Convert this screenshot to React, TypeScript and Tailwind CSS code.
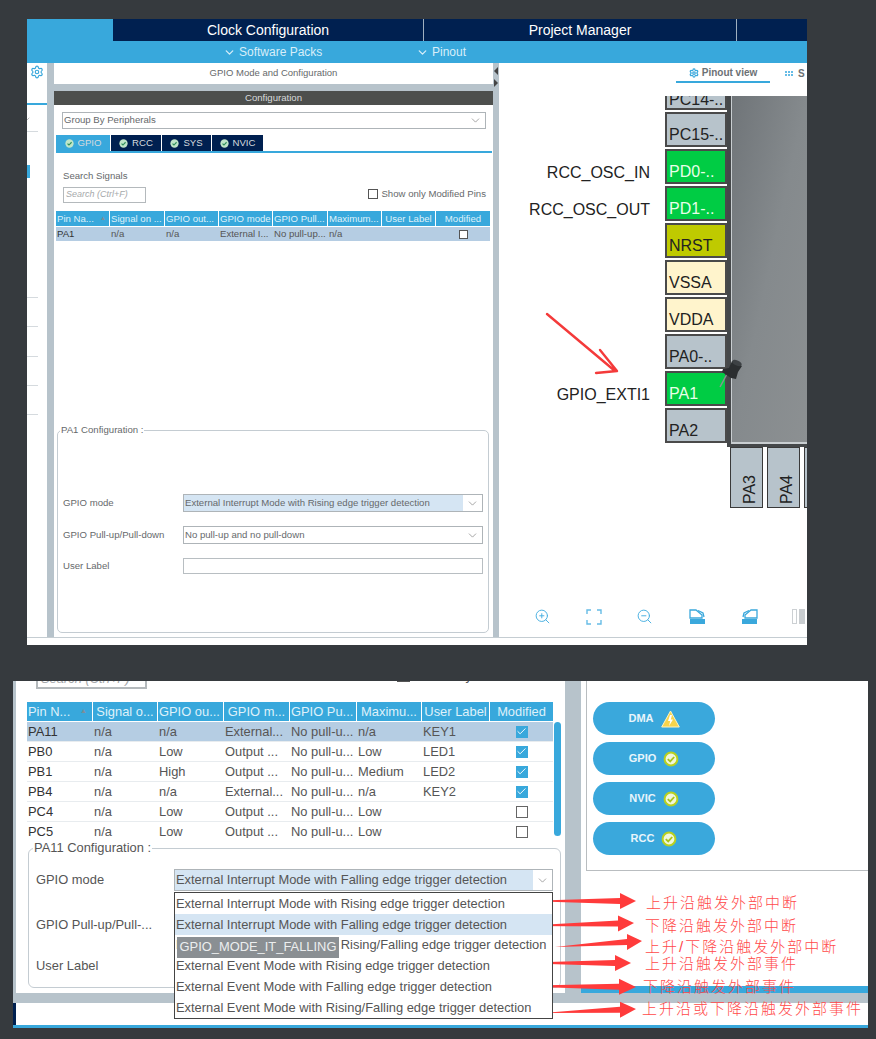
import React from "react";
import { ZoomIn, ZoomOut, ChevronDown, Check, Settings } from "lucide-react";

const topHead = ["Pin Na...", "Signal on ...", "GPIO out...", "GPIO mode", "GPIO Pull...", "Maximum...", "User Label", "Modified"];
const topRow = ["PA1", "n/a", "n/a", "External I...", "No pull-up...", "n/a", ""];
const botHead = ["Pin N...", "Signal o...", "GPIO ou...", "GPIO m...", "GPIO Pu...", "Maximu...", "User Label", "Modified"];
const botRows = [
  ["PA11", "n/a", "n/a", "External...", "No pull-u...", "n/a", "KEY1", true],
  ["PB0", "n/a", "Low", "Output ...", "No pull-u...", "Low", "LED1", true],
  ["PB1", "n/a", "High", "Output ...", "No pull-u...", "Medium", "LED2", true],
  ["PB4", "n/a", "n/a", "External...", "No pull-u...", "n/a", "KEY2", true],
  ["PC4", "n/a", "Low", "Output ...", "No pull-u...", "Low", "", false],
  ["PC5", "n/a", "Low", "Output ...", "No pull-u...", "Low", "", false],
] as const;

const pins = [
  { n: "PC15-..", c: "bg-[#b7c3cb] text-[#222]", l: "" },
  { n: "PD0-..", c: "bg-[#00cc44] text-[#e8ffe8]", l: "RCC_OSC_IN" },
  { n: "PD1-..", c: "bg-[#00cc44] text-[#e8ffe8]", l: "RCC_OSC_OUT" },
  { n: "NRST", c: "bg-[#bfca00] text-[#222]", l: "" },
  { n: "VSSA", c: "bg-[#fff4cc] text-[#222]", l: "" },
  { n: "VDDA", c: "bg-[#fff4cc] text-[#222]", l: "" },
  { n: "PA0-..", c: "bg-[#b7c3cb] text-[#222]", l: "" },
  { n: "PA1", c: "bg-[#00cc44] text-[#e8ffe8]", l: "GPIO_EXTI1" },
  { n: "PA2", c: "bg-[#b7c3cb] text-[#222]", l: "" },
];

const menu = [
  "External Interrupt Mode with Rising edge trigger detection",
  "External Interrupt Mode with Falling edge trigger detection",
  "External Interrupt Mode with Rising/Falling edge trigger detection",
  "External Event Mode with Rising edge trigger detection",
  "External Event Mode with Falling edge trigger detection",
  "External Event Mode with Rising/Falling edge trigger detection",
];

const notes = [
  { t: "上升沿触发外部中断", c: "left-[646px] top-[892px]" },
  { t: "下降沿触发外部中断", c: "left-[645px] top-[915px]" },
  { t: "上升/下降沿触发外部中断", c: "left-[645px] top-[936px]" },
  { t: "上升沿触发外部事件", c: "left-[645px] top-[953px]" },
  { t: "下降沿触发外部事件", c: "left-[643px] top-[976px]" },
  { t: "上升沿或下降沿触发外部事件", c: "left-[642px] top-[998px]" },
];

const arrows = [
  [526, 901, 620, 636, 901],
  [521, 926, 618, 634, 923],
  [555, 947, 627, 642, 941],
  [515, 963, 615, 631, 963],
  [510, 986, 619, 636, 987],
  [543, 1013, 620, 636, 1009],
];

function TabCheck() {
  return (
    <svg width="9" height="9" viewBox="0 0 10 10" className="shrink-0">
      <circle cx="5" cy="5" r="4.6" fill="#bfe6c8" />
      <path d="M2.8 5.1 4.4 6.7 7.3 3.6" fill="none" stroke="#2f8f5a" strokeWidth="1.3" />
    </svg>
  );
}

function PillCheck() {
  return (
    <svg width="16" height="16" viewBox="0 0 16 16" className="shrink-0">
      <circle cx="8" cy="8" r="6.4" fill="#f1f7dc" stroke="#b9d020" strokeWidth="2" />
      <path d="M4.8 8.1 7.2 10.4 11.2 6" fill="none" stroke="#a9c31a" strokeWidth="1.8" />
    </svg>
  );
}

function Warn() {
  return (
    <svg width="19" height="18" viewBox="0 0 19 18" className="shrink-0">
      <path d="M9.5 1 18.3 17H.7Z" fill="#f7d44c" stroke="#fff3c0" strokeWidth="1" />
      <path d="M9 5 7 11h2.2L8 16l4-6.4H9.8L11 5Z" fill="#fff" />
    </svg>
  );
}

function Fit() {
  return (
    <svg width="16" height="16" viewBox="0 0 16 16" fill="none" stroke="#66bce6" strokeWidth="1.4">
      <path d="M1 5V1h4M11 1h4v4M15 11v4h-4M5 15H1v-4" />
    </svg>
  );
}

function Rot({ flip }: { flip?: boolean }) {
  return (
    <svg width="17" height="16" viewBox="0 0 17 16" className={flip ? "-scale-x-100" : ""}>
      <path d="M1 1h6l6 5v3H5L1 9Z" fill="#fff" stroke="#3aa8dc" strokeWidth="1.3" />
      <path d="M1 10h15v5H1Z" fill="#3aa8dc" />
      <path d="M9 1.5 14 4l1 4" fill="none" stroke="#3aa8dc" strokeWidth="1.3" />
    </svg>
  );
}

function Select({ label, light, h }: { label: string; light?: boolean; h: string }) {
  return (
    <div className={`flex items-center border border-[#aeb4b8] ${h} ${light ? "" : "bg-white"}`}>
      <span className={`flex h-full flex-1 items-center whitespace-nowrap pl-[1px] ${light ? "bg-[#d5e5f3]" : ""}`}>{label}</span>
      <ChevronDown className="mr-[3px] ml-[3px] text-[#777]" size={13} strokeWidth={1.2} />
    </div>
  );
}

function Pill({ label, warn }: { label: string; warn?: boolean }) {
  return (
    <div className="flex h-[33px] w-[122px] items-center justify-center gap-[7px] rounded-full bg-[#3aa8dc] text-[11px] font-bold text-[#e8f5fb]">
      <span>{label}</span>
      {warn ? <Warn /> : <PillCheck />}
    </div>
  );
}

function TopWindow() {
  return (
    <div className="ml-[27px] flex h-[626px] w-[780px] flex-col overflow-hidden bg-white">
      <div className="flex h-[22px] bg-[#002050] text-[14px] text-white">
        <div className="w-[86px] bg-[#38a8dc]" />
        <div className="flex w-[311px] items-center justify-center border-r border-[#9fb0c0]">Clock Configuration</div>
        <div className="flex w-[313px] items-center justify-center border-r border-[#9fb0c0]">Project Manager</div>
      </div>
      <div className="relative flex h-[22px] items-center bg-[#38a8dc] text-[12px] text-[#d8eef9]">
        <div className="ml-[196px] flex w-[193px] items-center gap-[3px]">
          <ChevronDown size={13} strokeWidth={2.4} />
          <span>Software Packs</span>
        </div>
        <div className="flex items-center gap-[3px]">
          <ChevronDown size={13} strokeWidth={2.4} />
          <span>Pinout</span>
        </div>
      </div>
      <div className="flex h-[574px]">
        <div className="flex w-[20px] flex-col">
          <div className="flex h-[20px] items-start justify-end pt-[2px] pr-[3px]">
            <Settings size={14} className="text-[#3aa8dc]" strokeWidth={2} />
          </div>
          <div className="mt-[20px] h-[2px] bg-[#38a8dc]" />
          <ChevronDown size={8} strokeWidth={1.5} className="mt-[10px] -ml-[4px] text-[#777]" />
          <div className="mt-[8px] h-px w-[11px] bg-[#d5dade]" />
          <div className="mt-[33px] h-[13px] w-[3px] bg-[#38a8dc]" />
          <div className="mt-[119px] h-px w-[11px] bg-[#d5dade]" />
          <div className="mt-[28px] h-px w-[11px] bg-[#d5dade]" />
          <div className="mt-[29px] h-px w-[11px] bg-[#d5dade]" />
          <div className="mt-[28px] h-px w-[11px] bg-[#d5dade]" />
          <div className="mt-[28px] h-px w-[11px] bg-[#d5dade]" />
        </div>
        <div className="w-[7px] bg-[#b7c3cb]" />
        <div className="flex w-[439px] flex-col bg-[#b7c3cb] text-[#66696b]">
          <div className="flex h-[21px] items-center justify-center bg-white text-[9.5px]">GPIO Mode and Configuration</div>
          <div className="mt-[7px] flex h-[14px] items-center justify-center bg-[#4d4f4d] text-[9.6px] text-[#d8dadb]">Configuration</div>
          <div className="flex flex-1 flex-col bg-white pl-[2px] text-[9.6px]">
            <div className="mt-[7px] ml-[6px] w-[424px]">
              <Select label="Group By Peripherals" h="h-[17px]" />
            </div>
            <div className="mt-[6px] flex h-[16px] gap-px text-[9.6px] text-[#d5dade]">
              <div className="flex w-[54px] items-center justify-center gap-[4px] bg-[#38a8dc]"><TabCheck />GPIO</div>
              <div className="flex w-[50px] items-center justify-center gap-[4px] bg-[#002050]"><TabCheck />RCC</div>
              <div className="flex w-[49px] items-center justify-center gap-[4px] bg-[#002050]"><TabCheck />SYS</div>
              <div className="flex w-[51px] items-center justify-center gap-[4px] bg-[#002050]"><TabCheck />NVIC</div>
            </div>
            <div className="h-[2px] w-[436px] bg-[#38a8dc]" />
            <div className="mt-[17px] ml-[7px] h-[12px] leading-[12px]">Search Signals</div>
            <div className="mt-[5px] ml-[7px] flex items-center justify-between pr-[7px]">
              <div className="flex h-[16px] w-[83px] items-center border border-[#b4b9bc] pl-[2px] text-[9px] italic text-[#a6a9ab]">Search (Ctrl+F)</div>
              <div className="flex items-center gap-[3px] pb-[2px]">
                <div className="size-[10px] border border-[#555] bg-white" />
                <span className="whitespace-nowrap">Show only Modified Pins</span>
              </div>
            </div>
            <div className="mt-[8px] grid w-[434px] grid-cols-[53px_54px_53px_53px_54px_53px_53px_54px] gap-x-px">
              {topHead.map((t, i) => (
                <div key={t} className={`relative flex h-[15px] items-center overflow-hidden whitespace-nowrap bg-[#38a8dc] text-[#dff1fa] ${i > 5 ? "justify-center" : "pl-[1px]"}`}>
                  {t}
                  {i === 0 && <span className="absolute right-[3px] text-[6px] text-[#7d8e98]">▲</span>}
                </div>
              ))}
            </div>
            <div className="mt-px grid w-[434px] grid-cols-[53px_54px_53px_53px_54px_53px_53px_54px] gap-x-px bg-[#b5cde3] text-[#555]">
              {topRow.map((t, i) => (
                <div key={i} className={`flex h-[14px] items-center whitespace-nowrap pl-[1px] pb-px ${i === 0 ? "text-[#333]" : ""}`}>{t}</div>
              ))}
              <div className="flex items-center justify-center"><div className="size-[9px] border border-[#555] bg-white" /></div>
            </div>
            <fieldset className="mt-auto mb-[4px] ml-px flex h-[209px] w-[432px] flex-col rounded-[5px] border border-[#c4ccd2] pl-[5px] pr-[5px]">
              <legend className="-ml-[3px] px-[1px] leading-[12px]">PA1 Configuration :</legend>
              <div className="mt-[58px] flex items-center">
                <span className="w-[120px]">GPIO mode</span>
                <div className="w-[300px]"><Select light label="External Interrupt Mode with Rising edge trigger detection" h="h-[18px]" /></div>
              </div>
              <div className="mt-[14px] flex items-center">
                <span className="w-[120px] whitespace-nowrap">GPIO Pull-up/Pull-down</span>
                <div className="w-[300px]"><Select label="No pull-up and no pull-down" h="h-[18px]" /></div>
              </div>
              <div className="mt-[14px] flex items-center">
                <span className="w-[120px]">User Label</span>
                <div className="h-[16px] w-[300px] border border-[#b8bec2]" />
              </div>
            </fieldset>
          </div>
        </div>
        <div className="flex w-[6px] flex-col items-center gap-[4px] bg-[#b7c3cb] pt-[4px]">
          <div className="h-0 w-0 border-y-[4px] border-r-[4px] border-y-transparent border-r-[#444]" />
          <div className="h-0 w-0 border-y-[4px] border-l-[4px] border-y-transparent border-l-[#444]" />
        </div>
        <div className="flex min-w-0 flex-1 flex-col">
          <div className="flex h-[33px] items-start">
            <div className="mt-[1px] ml-[177px] flex h-[19px] w-[94px] items-center justify-center gap-[3px] border-b-2 border-[#38a8dc] text-[10px] font-bold text-[#6c7175]">
              <Settings size={10} className="text-[#3aa8dc]" strokeWidth={3} />
              <span>Pinout view</span>
            </div>
            <div className="mt-[3px] ml-[15px] flex items-center gap-[5px] text-[10px] font-bold text-[#6c7175]">
              <span className="grid grid-cols-3 gap-px">
                {[0, 1, 2, 3, 4, 5].map((k) => <span key={k} className="size-[2px] bg-[#66bce6]" />)}
              </span>
              <span>S</span>
            </div>
          </div>
          <div className="flex h-[351px]">
            <div className="flex h-[348px] w-[228px] flex-col gap-[2px]">
              <div className="ml-[166px] flex h-[14px] w-[62px] items-end overflow-hidden border-x-2 border-b-2 border-[#4a4a4a] bg-[#b7c3cb] pl-[2px] text-[16px] leading-[18px] text-[#222]">
                <span className="mb-[-1px]">PC14-..</span>
              </div>
              {pins.map((p) => (
                <div key={p.n} className="flex h-[35px] items-center">
                  <div className="w-[151px] whitespace-nowrap pt-[12px] text-right text-[16px] text-[#222]">{p.l}</div>
                  <div className={`ml-[15px] flex h-full w-[62px] items-end whitespace-nowrap border-2 border-[#4a4a4a] pl-[2px] text-[16px] leading-[20px] ${p.c}`}>{p.n}</div>
                </div>
              ))}
            </div>
            <div className="flex-1 border-b-[3px] border-l-[4px] border-[#45484a] bg-gradient-to-br from-[#6f7478] via-[#858a8d] to-[#8c9092] shadow-[inset_1px_-2px_0_#c9ced1]" />
          </div>
          <div className="ml-[231px] flex h-[61px] gap-[4px] overflow-hidden">
            {["PA3", "PA4", ""].map((t, i) => (
              <div key={i} className="flex w-[33px] shrink-0 items-end justify-center border border-[#3a3a3a] bg-[#b7c3cb] pb-[3px] pl-[7px] text-[16px] leading-[18px] text-[#222]">
                <span className="rotate-180 [writing-mode:vertical-rl]">{t}</span>
              </div>
            ))}
          </div>
          <div className="mt-[100px] flex items-center pl-[35px] text-[#4cb1e2]">
            <ZoomIn size={17} strokeWidth={1.4} />
            <div className="ml-[35px]"><Fit /></div>
            <div className="ml-[34px]"><ZoomOut size={17} strokeWidth={1.4} /></div>
            <div className="ml-[36px]"><Rot /></div>
            <div className="ml-[35px]"><Rot flip /></div>
            <div className="ml-[34px] flex gap-[2px]">
              <span className="h-[15px] w-[5px] border border-[#ccd0d3]" />
              <span className="h-[15px] w-[6px] bg-[#c9cdd0]" />
            </div>
          </div>
        </div>
      </div>
      <div className="h-[8px] border-t border-[#c5cdd2] bg-white" />
    </div>
  );
}

function BottomWindow() {
  return (
    <div className="mt-[36px] ml-[13px] flex h-[347px] w-[855px] flex-col overflow-hidden bg-white">
      <div className="flex h-[312px]">
        <div className="w-[3px] bg-[#b7c3cb]" />
        <div className="flex w-[549px] flex-col text-[12.9px] text-[#555]">
          <div className="flex h-[7px] items-end justify-between pl-[20px] pr-[12px]">
            <div className="mb-[-1px] flex h-[20px] w-[111px] shrink-0 items-center border-2 border-[#b4b9bc] pl-[3px] italic text-[#a6a9ab]">Search (Ctrl+F)</div>
            <div className="mb-[3px] flex items-center gap-[3px] text-[#555]">
              <div className="size-[13px] border border-[#555]" />
              <span className="whitespace-nowrap">Show only Modified Pins</span>
            </div>
          </div>
          <div className="mt-[14px] flex">
            <div className="ml-[11px] w-[526px]">
              <div className="grid grid-cols-[65px_64px_65px_65px_66px_64px_67px_63px] gap-x-px">
                {botHead.map((t, i) => (
                  <div key={t} className={`relative flex h-[19px] items-center whitespace-nowrap bg-[#38a8dc] text-[#dff1fa] ${i > 5 || i === 1 || i === 3 || i === 5 ? "justify-center" : "pl-[1px]"}`}>
                    {t}
                    {i === 0 && <span className="absolute right-[5px] text-[7px] text-[#7d8e98]">▲</span>}
                  </div>
                ))}
              </div>
              <div className="mt-px h-[116px] overflow-hidden">
                {botRows.map((r, ri) => (
                  <div key={ri} className={`grid h-[20px] grid-cols-[65px_64px_65px_65px_66px_64px_67px_63px] gap-x-px border-b border-[#e8ecef] ${ri === 0 ? "bg-[#b5cde3]" : "bg-white"}`}>
                    {r.slice(0, 7).map((c, ci) => (
                      <div key={ci} className={`flex items-center whitespace-nowrap pl-[1px] ${ci === 0 ? "text-[#333]" : ""}`}>{c as string}</div>
                    ))}
                    <div className="flex items-center justify-center">
                      {r[7] ? (
                        <div className="flex size-[12px] items-center justify-center bg-[#38a8dc]"><Check size={11} strokeWidth={2} className="text-white" /></div>
                      ) : (
                        <div className="size-[12px] border border-[#666] bg-white" />
                      )}
                    </div>
                  </div>
                ))}
              </div>
            </div>
            <div className="mt-[20px] ml-px h-[114px] w-[7px] rounded-full bg-[#38a8dc]" />
          </div>
          <fieldset className="mt-[3px] ml-[12px] h-[147px] w-[532px] rounded-[6px] border border-[#c4ccd2] pl-[7px] pr-[7px]">
            <legend className="-ml-[3px] px-[1px] leading-[14px]">PA11 Configuration :</legend>
            <div className="mt-[14px] flex items-center">
              <span className="w-[138px]">GPIO mode</span>
              <div className="relative w-[379px]">
                <Select light label="External Interrupt Mode with Falling edge trigger detection" h="h-[22px]" />
                <div className="absolute top-[23px] left-0 z-10 flex h-[127px] w-full flex-col border border-[#444] bg-white">
                  {menu.map((m, i) => (
                    <div key={m} className={`relative flex h-[21px] items-center whitespace-nowrap pl-[1px] ${i === 1 ? "bg-[#d5e5f3]" : ""}`}>
                      {m}
                      {i === 2 && <span className="absolute top-[2px] left-[2px] flex h-[21px] w-[162px] items-center justify-center bg-[#8a8f93] text-[#eceeef]">GPIO_MODE_IT_FALLING</span>}
                    </div>
                  ))}
                </div>
              </div>
            </div>
            <div className="mt-[26px] h-[16px] leading-[16px]">GPIO Pull-up/Pull-...</div>
            <div className="mt-[25px] h-[16px] leading-[16px]">User Label</div>
          </fieldset>
        </div>
        <div className="w-[16px] bg-[#b7c3cb]" />
        <div className="flex flex-1 flex-col">
          <div className="ml-[5px] flex h-[190px] flex-col gap-[7px] border-b border-l border-[#b9bdc0] pt-[21px] pl-[6px]">
            <Pill label="DMA" warn />
            <Pill label="GPIO" />
            <Pill label="NVIC" />
            <Pill label="RCC" />
          </div>
          <div className="mt-auto h-[7px] bg-[#38a8dc]" />
        </div>
      </div>
      <div className="h-[10px] bg-[#b7c3cb]" />
      <div className="h-[22px] bg-white"><div className="h-full w-[3px] bg-[#002050]" /></div>
      <div className="h-[3px] bg-[#38a8dc]" />
    </div>
  );
}

export default function App() {
  return (
    <div className="relative h-[1039px] w-[876px] overflow-hidden bg-[#363a3e] pt-[19px] font-['Liberation_Sans','Noto_Sans_CJK_SC',sans-serif]">
      <TopWindow />
      <BottomWindow />
      {notes.map((n) => (
        <div key={n.t} className={`absolute whitespace-nowrap text-[15px] leading-[22px] font-light tracking-[2px] text-[#ff4a4a] ${n.c}`}>{n.t}</div>
      ))}
      <svg className="pointer-events-none absolute top-0 left-0" width="876" height="1039" viewBox="0 0 876 1039">
        <path d="M547 314 615 371M600 350 617 371 596 373" fill="none" stroke="#f43a3a" strokeWidth="2.4" strokeLinecap="round" strokeLinejoin="round" />
        <path d="M727 374 720 387" stroke="#8a8f92" strokeWidth="1.5" />
        <path d="M732 361 742 366 738 372 736 379 731 378 722 372 723 369 729 368Z" fill="#2b2e30" />
        <ellipse cx="737" cy="363" rx="5" ry="2.5" transform="rotate(25 737 363)" fill="#3d4144" />
        {arrows.map(([x1, y1, bx, tx, ty], i) => {
          const by = y1 + ((ty - y1) * (bx - x1)) / (tx - x1);
          return <path key={i} d={`M${x1} ${y1} L${bx} ${by - 3} L${bx} ${by - 8} L${tx} ${ty} L${bx} ${by + 8} L${bx} ${by + 3} Z`} fill="#ff3b3b" />;
        })}
      </svg>
    </div>
  );
}
